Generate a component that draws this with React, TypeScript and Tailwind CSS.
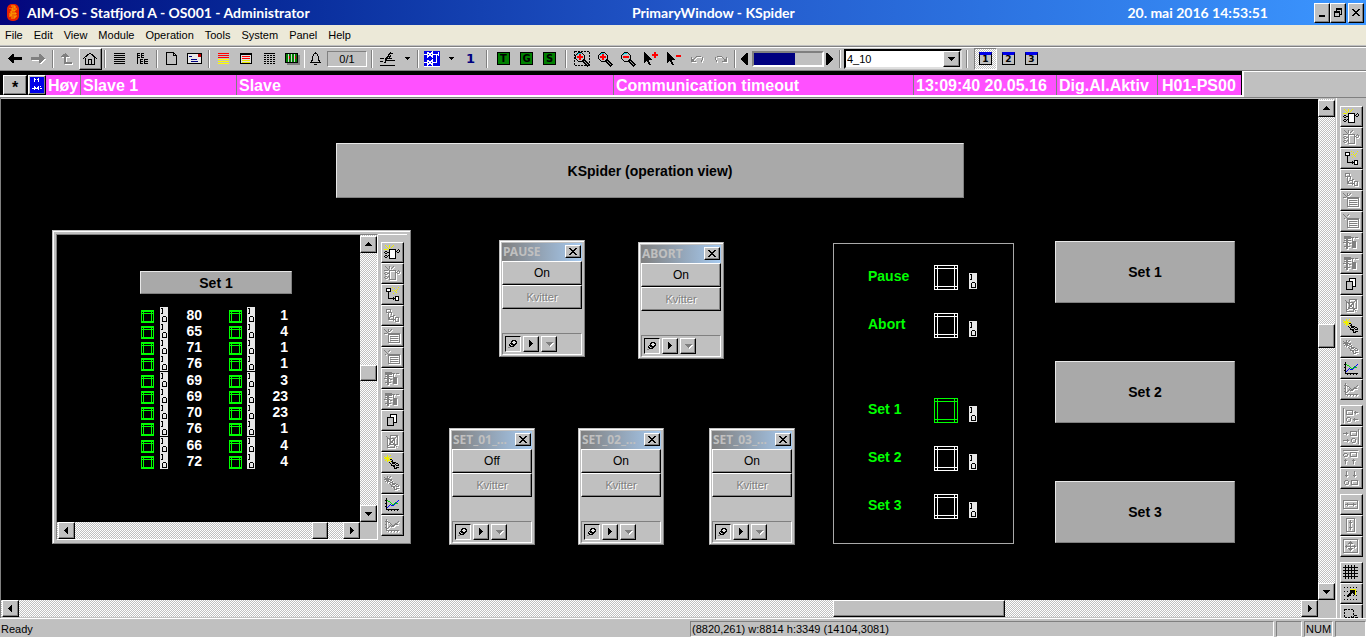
import type { ReactNode } from "react";
import clsx from "clsx";

const raised =
    "border border-t-white border-l-white border-r-black border-b-black bg-[#c0c0c0] text-black shadow-[inset_-1px_-1px_#808080]";
const sunken = "border border-t-[#808080] border-r-white border-b-white border-l-[#808080]";
const dither = "bg-[conic-gradient(#fff_25%,#c0c0c0_0_50%,#fff_0_75%,#c0c0c0_0)] bg-[length:2px_2px]";
const etched = "text-[#808080] drop-shadow-[1px_1px_0_#fff]";
const plate =
    "border border-t-[#e8e8e8] border-l-[#e8e8e8] border-r-[#808080] border-b-[#808080] bg-[#a9a9a9] text-[14px] font-bold text-black";

type IconProps = { w?: number; h?: number; className?: string; children: ReactNode };

const Icon = ({ w = 16, h = 16, className, children }: IconProps) => (
    <svg
        width={w}
        height={h}
        viewBox={`0 0 ${w} ${h}`}
        fill="none"
        stroke="currentColor"
        shapeRendering="crispEdges"
        className={clsx("shrink-0", className)}
        aria-hidden="true"
    >
        {children}
    </svg>
);

/* ---------- Scrollbars ---------- */

const ARROWS = {
    up: "M4 2h1v1h1v1h1v1h1v1H1V5h1V4h1V3h1z",
    down: "M1 3h7v1H7v1H6v1H5v1H4V6H3V5H2V4H1z",
    left: "M5 1h1v7H5V7H4V6H3V5H2V4h1V3h1V2h1z",
    right: "M3 1h1v1h1v1h1v1h1v1H6v1H5v1H4v1H3z",
};

const Arrow = ({ dir, className }: { dir: keyof typeof ARROWS; className?: string }) => (
    <Icon w={9} h={9} className={className}>
        <path d={ARROWS[dir]} fill="currentColor" stroke="none" />
    </Icon>
);

const ScrollButton = ({ dir }: { dir: keyof typeof ARROWS }) => (
    <button
        type="button"
        aria-label={`Scroll ${dir}`}
        className={clsx("flex h-[17px] w-[17px] shrink-0 items-center justify-center", raised)}
    >
        <Arrow dir={dir} />
    </button>
);

type ScrollProps = { before: number; after: number; thumb: string };

const VScroll = ({ before, after, thumb }: ScrollProps) => (
    <div className={clsx("flex w-[17px] shrink-0 flex-col pt-px", dither)}>
        <ScrollButton dir="up" />
        <div style={{ flexGrow: before }} />
        <div className={clsx("w-full shrink-0", thumb, raised)} />
        <div style={{ flexGrow: after }} />
        <ScrollButton dir="down" />
    </div>
);

const HScroll = ({ before, after, thumb }: ScrollProps) => (
    <div className={clsx("flex h-[17px] min-w-0 flex-1 pl-px", dither)}>
        <ScrollButton dir="left" />
        <div style={{ flexGrow: before }} />
        <div className={clsx("h-full shrink-0", thumb, raised)} />
        <div style={{ flexGrow: after }} />
        <ScrollButton dir="right" />
    </div>
);

/* ---------- Vertical tool palette ---------- */

const NewObject = ({ off }: { off?: boolean }) => (
    <Icon className={off ? etched : undefined}>
        <path
            d="M1 0h1v1h1v1h1v1h1v1H4V3H3V2H2V1H1zM5 0h1v3H5zM9 0h1v1H9v1H8v1H7V2h1V1h1zM0 4h4v1H0z"
            fill={off ? "currentColor" : "#f0f000"}
            stroke="none"
        />
        <rect x="5.5" y="4.5" width="6" height="9" fill={off ? "none" : "#fff"} />
        <path d="M1 6.5h2M.5 7v1M3.5 7v1M1 8.5h2M1 10.5h2M.5 11v1M3.5 11v1M1 12.5h2M4 7.5h1M4 10.5h1M12 6.5h1M13 5.5h1M14 4.5h1M15.5 5v2M13 7.5h2" />
    </Icon>
);

const Connect = ({ off }: { off?: boolean }) => (
    <Icon className={off ? etched : undefined}>
        {off ? (
            <path d="M6 4.5h2M7.5 5v2M9 7.5h2M6 8.5h3M5.5 9v2M9.5 8v2" />
        ) : (
            <path
                d="M8 3h1v1H8zM10 1h1v1h-1zM11 4h1v1h-1zM13 2h1v1h-1zM9 6h1v1H9zM12 5h1v1h-1zM14 0h1v1h-1zM10 3h1v1h-1zM12 3h1v1h-1zM8 0h1v1H8z"
                fill="#f0f000"
                stroke="none"
            />
        )}
        <rect x="2.5" y="1.5" width="4" height="3" fill={off ? "none" : "#fff"} />
        <rect x="11.5" y="9.5" width="3" height="4" fill={off ? "none" : "#fff"} />
        <path d="M4.5 5v6.5H11M9.5 10v3" />
    </Icon>
);

const ListPage = ({ star }: { star?: boolean }) => (
    <Icon className={etched}>
        <path d={star ? "M0 .5h1M1 1.5h1M2 2.5h1M3 3.5h1M4.5 0v3M7 .5h1M6 1.5h1M5 2.5h1M0 4.5h3" : "M0 .5h1M1 1.5h1M2 2.5h1M3 3.5h1M5 .5h1M4 1.5h1M1 4.5h1"} />
        <path d="M4.5 4.5h11v9h-11zM6 7.5h8M6 9.5h8M6 11.5h8M5 5.5h10" />
    </Icon>
);

const Hierarchy = () => (
    <Icon className={etched}>
        <path d="M1 1h7v3H1zM3 4h2v10H3zM9 6h4v7H9z" fill="currentColor" stroke="none" />
        <path d="M8 2.5h3M12 2.5h3M5 5.5h3M0 7.5h6M1 11.5h6M1 5.5h2M9.5 3v3M6 8.5h2" />
    </Icon>
);

const Copy = () => (
    <Icon>
        <path d="M6.5 4V1.5h6v8h-3" fill="#fff" />
        <rect x="3.5" y="4.5" width="6" height="8" fill="#c0c0c0" />
    </Icon>
);

const CopyOff = () => (
    <Icon className={etched}>
        <path d="M6.5 1.5h7v9h-7zM3.5 4.5h7v9h-7zM2 2l11 11M13 2L3 13" />
    </Icon>
);

const Plug = ({ off }: { off?: boolean }) => (
    <Icon className={off ? etched : undefined}>
        <path d="M0 1l7 6M3.5 0v7M7 0L1 6M0 3.5h8" stroke={off ? "currentColor" : "#f0f000"} />
        <path d="M6 4.5h2M8.5 5v3M9 7.5h3M5 7.5h1M6 8.5h1M7.5 9v2M8 10.5h2M10.5 11v3M12 8.5h2M11 9.5h1M10 10.5h1M12 10.5h3M12 12.5h3M14 9.5h1M11 13.5h2M7 6.5h1M8 8.5h3M9 11.5h1" />
    </Icon>
);

const Trend = ({ off }: { off?: boolean }) => (
    <Icon className={off ? etched : undefined}>
        <path d="M2.5 1v11.5H15M1 3.5h1M1 6.5h1M1 9.5h1M4.5 13v1M7.5 13v1M10.5 13v1M13.5 13v1" />
        <path d="M3 3.5h1M4 4.5h2M6 5.5h1M7 6.5h1M8 7.5h2M10 6.5h1M11 5.5h1M12 6.5h2" stroke={off ? "currentColor" : "#00e000"} />
        <path d="M3 10.5h1M4 9.5h1M5 8.5h1M6 7.5h1M7 8.5h3M10 7.5h1M11 6.5h1M12 5.5h1M13 4.5h1M14 3.5h1" stroke={off ? "currentColor" : "#0000ff"} />
    </Icon>
);

const Etched = ({ d }: { d: string }) => (
    <Icon className={etched}>
        <path d={d} />
    </Icon>
);

const GridIcon = () => (
    <Icon>
        <path d="M0 2.5h15M0 5.5h15M0 8.5h15M0 11.5h15M2.5 0v14M5.5 0v14M8.5 0v14M11.5 0v14" />
    </Icon>
);

const Snap = () => (
    <Icon>
        <path d="M1 1.5h14M1 5.5h14M1 9.5h14M1 13.5h14" strokeDasharray="1 2" />
        <path d="M7 4h5v5h-1V8h-1V7H9v1H8v1H7v1H6v1H4V9h1V8h1V7h1V6h1V5H7z" fill="#000" stroke="none" />
        <path d="M7 3.5h5.5V9" stroke="#f0f000" />
    </Icon>
);

const SelectArea = () => (
    <Icon>
        <path d="M1.5 2.5h9v8h-9z" strokeDasharray="2 1" />
        <path d="M8 9.5h1M9 10.5h2M11 8.5h3M12 10.5h3M10 12.5h5" />
    </Icon>
);

type ToolEntry = [string, ReactNode];

const objectTools: ToolEntry[] = [
    ["New object", <NewObject />],
    ["Object", <NewObject off />],
    ["New connection", <Connect />],
    ["Connection", <Connect off />],
    ["New list", <ListPage star />],
    ["List", <ListPage />],
    ["New hierarchy", <Hierarchy />],
    ["Hierarchy", <Hierarchy />],
    ["Copy", <Copy />],
    ["Cut copy", <CopyOff />],
    ["New link", <Plug />],
    ["Link", <Plug off />],
    ["New trend", <Trend />],
    ["Trend", <Trend off />],
];

const alignTools: ToolEntry[] = [
    ["Align left", <Etched d="M.5 0v15M3.5 2.5h6v4h-6zM11 4.5h4M12.5 3v3M4 9.5h3M3.5 10v3M7.5 10v3M4 13.5h3M10 11.5h5M11.5 10v3" />],
    ["Align right", <Etched d="M15.5 0v15M7.5 2.5h6v4h-6zM0 4.5h5M3.5 3v3M9 9.5h3M8.5 10v3M12.5 10v3M9 13.5h3M0 11.5h6M4.5 10v3" />],
    ["Align top", <Etched d="M0 .5h15M1 3.5h3M.5 4v2M4.5 4v2M1 6.5h3M7.5 2.5h6v4h-6zM2.5 9v5M1 10.5h3M10.5 9v5M9 10.5h3" />],
    ["Align bottom", <Etched d="M3.5 0v6M2 4.5h3M11.5 0v6M10 4.5h3M2 9.5h3M1.5 10v3M5.5 10v3M2 13.5h3M8.5 9.5h6v4h-6z" />],
];

const sizeTools: ToolEntry[] = [
    ["Same width", <Etched d="M.5 3.5h14v8H.5zM2 7.5h11M4.5 6v3M10.5 6v3" />],
    ["Same height", <Etched d="M3.5 .5h8v13h-8zM7.5 2v10M6 4.5h3M6 9.5h3" />],
    ["Same size", <Etched d="M.5 .5h14v13H.5zM2 7.5h11M7.5 2v10M6 3.5h3M6 10.5h3M3.5 6v3M11.5 6v3M5 4.5h5M5 9.5h5" />],
];

const gridTools: ToolEntry[] = [
    ["Grid", <GridIcon />],
    ["Snap to grid", <Snap />],
    ["Select area", <SelectArea />],
];

const ToolGroup = ({ tools }: { tools: ToolEntry[] }) => (
    <div className="flex flex-col">
        {tools.map(([label, icon]) => (
            <button
                key={label}
                type="button"
                aria-label={label}
                className={clsx("flex h-[21px] w-[23px] shrink-0 items-start pt-[2px] pl-[2px]", raised)}
            >
                {icon}
            </button>
        ))}
    </div>
);

/* ---------- Title bar, menu and toolbar ---------- */

const CloseIcon = () => (
    <Icon w={8} h={7}>
        <path
            d="M0 0h2v1h1v1h2V1h1V0h2v1H7v1H6v1H5v1h1v1h1v1h1v1H6V6H5V5H3v1H2v1H0V6h1V5h1V4h1V3H2V2H1V1H0z"
            fill="#000"
            stroke="none"
        />
    </Icon>
);

const TitleBar = () => (
    <header className="flex h-[25px] shrink-0 items-center bg-linear-to-r from-[#04047c] via-[#2256c8] to-[#3c96ff] pr-[2px] pl-[7px] font-['Lato',sans-serif] text-[14px] font-bold text-white">
        <svg width="12" height="17" viewBox="0 0 12 17" aria-hidden="true">
            <rect width="12" height="17" rx="5" fill="#e82000" />
            <path d="M4 2h4v2H5v2h3v1H4v2h5v1H4v2h4v2H4M3 4v1M9 4v2M3 9v4M9 11v2" stroke="#ffb000" fill="none" />
        </svg>
        <h1 className="ml-2 w-[605px] shrink-0">AIM-OS - Statfjord A - OS001 - Administrator</h1>
        <span>PrimaryWindow - KSpider</span>
        <time className="mr-[46px] ml-auto">20. mai 2016 14:53:51</time>
        <div className="flex">
            <button type="button" aria-label="Minimize" className={clsx("flex h-5 w-4 items-center justify-center", raised)}>
                <Icon w={8} h={8}>
                    <path d="M1 7h6" strokeWidth="2" />
                </Icon>
            </button>
            <button type="button" aria-label="Restore" className={clsx("flex h-5 w-4 items-center justify-center", raised)}>
                <Icon w={10} h={10}>
                    <path d="M3 .5h6M3 1.5h6M3.5 1v2M8.5 1v5H7M1 3.5h6M1 4.5h6M1.5 4v4.5h5V4" />
                </Icon>
            </button>
            <button type="button" aria-label="Close" className={clsx("ml-0.5 flex h-5 w-4 items-center justify-center pb-px", raised)}>
                <CloseIcon />
            </button>
        </div>
    </header>
);

const menus = ["File", "Edit", "View", "Module", "Operation", "Tools", "System", "Panel", "Help"];

const MenuBar = () => (
    <nav className="flex h-[21px] shrink-0 items-center gap-[11px] border-b border-[#c0c0c0] bg-[#ece9d8] pl-[5px] text-[11px]">
        {menus.map((menu) => (
            <button key={menu} type="button">
                {menu}
            </button>
        ))}
    </nav>
);

const Separator = ({ wide }: { wide?: boolean }) => (
    <div className={clsx("flex shrink-0 justify-center", wide ? "w-[10px]" : "w-[6px]")}>
        <div className="h-[18px] w-[2px] border-r border-l border-r-white border-l-[#808080]" />
    </div>
);

const Tool = ({ label, className, children }: { label: string; className?: string; children: ReactNode }) => (
    <button
        type="button"
        aria-label={label}
        className={clsx("flex h-[22px] shrink-0 items-center justify-center", className ?? "w-[23px]")}
    >
        {children}
    </button>
);

/* Toolbar buttons are 23px wide and 22px high, so pad a drawing to odd width and even height */
const ToolIcon = ({ w = 16, h = 16, className, children }: IconProps) => (
    <Icon w={w} h={h} className={clsx(w % 2 === 0 && "mr-px", h % 2 === 1 && "mb-px", className)}>
        {children}
    </Icon>
);

const Caret = () => (
    <ToolIcon w={5} h={3}>
        <path d="M0 0h5v1H4v1H3v1H2V2H1V1H0z" fill="currentColor" stroke="none" />
    </ToolIcon>
);

const LetterTool = ({ letter }: { letter: string }) => (
    <Tool label={`Display ${letter}`}>
        <span className="h-[13px] w-[13px] border border-black bg-[#008000] text-center font-['DejaVu_Sans',sans-serif] text-[10px] leading-[11px] font-bold">
            {letter}
        </span>
    </Tool>
);

const Magnifier = ({ sign, area }: { sign: "plus" | "minus"; area?: boolean }) => (
    <ToolIcon>
        {area && <path d="M.5 .5h15v14H.5z" strokeDasharray="2 1" />}
        <path d="M4 1.5h4M3 2.5h1M8 2.5h1M2.5 3v1M9.5 3v1M1.5 4v4M10.5 4v4M2.5 8v1M9.5 8v1M3 9.5h1M8 9.5h1M4 10.5h4" />
        <path d="M3 3.5h1M4 2.5h3" stroke="#00d0e0" />
        <path d="M9 9l6 6" strokeWidth="3" />
        <path d="M10 10l4 4" stroke="#a0a0a0" />
        <path d={sign === "plus" ? "M3 6h6M6 3v6" : "M3 6h6"} stroke="#ff0000" strokeWidth="2" />
    </ToolIcon>
);

const Pointer = ({ sign }: { sign: "plus" | "minus" }) => (
    <ToolIcon>
        <path d="M1 1h1v1h1v1h1v1h1v1h1v1h1v1h1v1h1v1H6v2h1v2h1v1H6v-1H5v-2H4v-1H3v1H2v1H1z" fill="currentColor" stroke="none" />
        <path d={sign === "plus" ? "M9 4h6M12 1v6" : "M10 5h5"} stroke="#ff0000" strokeWidth="2" />
    </ToolIcon>
);

const ValveIcon = () => (
    <ToolIcon>
        <rect width="16" height="16" fill="#0000e8" stroke="none" />
        <path
            d="M0 3.5h3M3.5 1v5l5-5v5l-5-5M9 3.5h5M12.5 3v8M0 11.5h3M3.5 9v5l5-5v5l-5-5M9 11.5h4M0 15.5h16M14.5 1v4"
            stroke="#fff"
        />
    </ToolIcon>
);

const AlarmValveIcon = () => (
    <Icon w={14} h={16}>
        <rect width="14" height="16" fill="#0000e8" stroke="none" />
        <path
            d="M4.5 1v4M5.5 2v1M7.5 2v1M8.5 1v4M4.5 9v4M5.5 10v2M6.5 11v1M7.5 10v2M8.5 9v4M2 11.5h2M10 9.5h1M10 11.5h2"
            stroke="#fff"
        />
    </Icon>
);

const WindowTool = ({ number, active }: { number: number; active?: boolean }) => (
    <button
        type="button"
        aria-pressed={!!active}
        className={clsx("flex h-[22px] w-[23px] shrink-0 items-center justify-center", active && [sunken, dither])}
    >
        <span className="h-[13px] w-[13px] border border-t-[3px] border-black border-t-[#0000e8] bg-[#c0c0c0] text-center font-['DejaVu_Sans',sans-serif] text-[9px] leading-[9px] font-bold">
            {number}
        </span>
    </button>
);

const Toolbar = () => (
    <div className="flex h-[25px] shrink-0 items-center border-t border-b border-[#808080] bg-[#c0c0c0] pl-1 shadow-[inset_0_1px_#fff]">
        <Tool label="Back">
            <ToolIcon w={14} h={9}>
                <path d="M0 4h1V3h1V2h1V1h1V0h2v3h8v3H6v3H4V8H3V7H2V6H1V5H0z" fill="#000" stroke="none" />
            </ToolIcon>
        </Tool>
        <Tool label="Forward">
            <ToolIcon w={14} h={9} className={etched}>
                <path d="M14 4h-1V3h-1V2h-1V1h-1V0H8v3H0v3h8v3h2V8h1V7h1V6h1V5h1z" fill="currentColor" stroke="none" />
            </ToolIcon>
        </Tool>
        <Separator />
        <Tool label="Up">
            <ToolIcon w={12} h={12} className={etched}>
                <path d="M4 0h1v1h1v1h1v1h1v1H5v5h6v2H3V4H0V3h1V2h1V1h2z" fill="currentColor" stroke="none" />
            </ToolIcon>
        </Tool>
        <Tool label="Home" className={clsx("w-[23px]", raised)}>
            <ToolIcon w={14} h={13}>
                <path d="M0 7l7-6 7 6M2.5 6v6.5h9V6M5.5 12V7.5h3V12" />
            </ToolIcon>
        </Tool>
        <Separator />
        <Tool label="Alarm list">
            <ToolIcon w={11} h={11}>
                <path d="M0 .5h11M0 2.5h11M0 4.5h11M0 6.5h11M0 8.5h11M0 10.5h11" />
            </ToolIcon>
        </Tool>
        <Tool label="Event tree">
            <ToolIcon w={11} h={11}>
                <path d="M.5 0v11M0 .5h3M4 .5h3M0 2.5h3M4 2.5h3M0 4.5h3M4 4.5h3M4.5 0v5M3.5 6v5M3 6.5h3M3 8.5h3M3 10.5h3M7.5 6v5M7 6.5h4M7 8.5h4M7 10.5h4" />
            </ToolIcon>
        </Tool>
        <Separator />
        <Tool label="New page">
            <ToolIcon w={11} h={13}>
                <path d="M.5 .5h7v3h3v9H.5zM8 1.5h1M9 2.5h1" />
            </ToolIcon>
        </Tool>
        <Tool label="Message">
            <ToolIcon w={15} h={11}>
                <rect x=".5" y=".5" width="14" height="10" fill="#e8e8e8" />
                <path d="M2 3.5h3M4 6.5h6M4 8.5h7" stroke="#000080" />
                <path d="M11 2.5h3" stroke="#c00000" strokeWidth="3" />
            </ToolIcon>
        </Tool>
        <Separator />
        <Tool label="Alarm lines">
            <ToolIcon w={11} h={11}>
                <path d="M0 .5h11M0 2.5h11M0 4.5h11" stroke="#ff0000" />
                <path d="M0 6.5h11M0 8.5h11M0 10.5h11" stroke="#ffff00" />
            </ToolIcon>
        </Tool>
        <Tool label="Alarm window">
            <ToolIcon w={12} h={11}>
                <rect x=".5" y=".5" width="11" height="10" fill="#e0e0e0" />
                <path d="M0 1.5h12" />
                <path d="M2 3.5h8M2 5.5h8" stroke="#ff0000" />
                <path d="M2 7.5h8M2 9.5h8" stroke="#e8e800" />
            </ToolIcon>
        </Tool>
        <Tool label="Event list">
            <ToolIcon w={11} h={11}>
                <path d="M0 .5h11" />
                <path d="M0 2.5h11M0 4.5h11M0 6.5h11M0 8.5h11M0 10.5h11" strokeDasharray="2 1" />
            </ToolIcon>
        </Tool>
        <Tool label="Rack">
            <ToolIcon w={15} h={12}>
                <path d="M2 2h13v10H2z" fill="#808080" stroke="none" />
                <rect x=".5" y=".5" width="12" height="9" fill="#008000" />
                <path d="M3.5 1v8M6.5 1v8M9.5 1v8" stroke="#d0d0d0" />
                <path d="M4.5 3v3M10.5 3v3" stroke="#c00000" />
            </ToolIcon>
        </Tool>
        <div className="h-[18px] w-px shrink-0 bg-white" />
        <Tool label="Acknowledge" className="w-[21px]">
            <ToolIcon w={11} h={13}>
                <path d="M5.5 0v2M4 1.5h3M3.5 2v2M7.5 2v2M2.5 4v5M8.5 4v5M1.5 8v2M9.5 8v2M0 10.5h11M4 12.5h3" />
            </ToolIcon>
        </Tool>
        <output className={clsx("ml-px h-4 w-10 shrink-0 text-center text-[11px] leading-[14px]", sunken)}>0/1</output>
        <Separator wide />
        <Tool label="Sign">
            <ToolIcon w={16} h={14}>
                <path d="M0 6.5h4M0 9.5h3M7 8.5h8M8.5 2v3M9.5 1v2M10.5 0v2M11 1.5h2M7.5 4v3M6.5 5v4M5.5 6v4M4 10.5h2M9.5 4v2M10.5 3v2M8 6.5h4M0 13.5h15" />
            </ToolIcon>
        </Tool>
        <Tool label="Sign options" className="w-[15px]">
            <Caret />
        </Tool>
        <Separator />
        <Tool label="Process display">
            <ValveIcon />
        </Tool>
        <Tool label="Display options" className="w-[15px]">
            <Caret />
        </Tool>
        <button type="button" className="w-[23px] text-center font-['DejaVu_Sans',sans-serif] text-[13px] font-bold text-[#000080]">
            1
        </button>
        <Separator wide />
        <LetterTool letter="T" />
        <LetterTool letter="G" />
        <LetterTool letter="S" />
        <Separator wide />
        <Tool label="Zoom area">
            <Magnifier sign="plus" area />
        </Tool>
        <Tool label="Zoom in">
            <Magnifier sign="plus" />
        </Tool>
        <Tool label="Zoom out">
            <Magnifier sign="minus" />
        </Tool>
        <Tool label="Add to selection">
            <Pointer sign="plus" />
        </Tool>
        <Tool label="Remove from selection">
            <Pointer sign="minus" />
        </Tool>
        <Tool label="Undo">
            <ToolIcon w={13} h={9} className={etched}>
                <path d="M.5 3v4.5H5M1.5 5v2M2.5 5v2M3.5 4v1M4.5 3v1M5 2.5h5M11.5 3v3M10.5 6v2" />
            </ToolIcon>
        </Tool>
        <Tool label="Redo">
            <ToolIcon w={13} h={9} className={etched}>
                <path d="M12.5 3v4.5H8M11.5 5v2M10.5 5v2M9.5 4v1M8.5 3v1M8 2.5H3M1.5 3v3M2.5 6v2" />
            </ToolIcon>
        </Tool>
        <Separator />
        <Tool label="Previous" className="w-[13px]">
            <ToolIcon w={8} h={12}>
                <path d="M8 0v12H7L0 6l7-6z" fill="#000" stroke="none" />
            </ToolIcon>
        </Tool>
        <div className="ml-px h-4 w-[72px] shrink-0 border-2 border-t-[#808080] border-r-white border-b-white border-l-[#808080]">
            <div className="h-full w-3/5 bg-[#000080]" />
        </div>
        <Tool label="Next" className="w-[13px]">
            <ToolIcon w={8} h={12}>
                <path d="M0 0h1l7 6-7 6H0z" fill="#000" stroke="none" />
            </ToolIcon>
        </Tool>
        <Separator />
        <div className="relative ml-px flex h-5 w-[118px] shrink-0">
            <select
                aria-label="Display"
                className="h-full w-full appearance-none rounded-none border-2 border-t-black border-r-[#dfdfdf] border-b-[#dfdfdf] border-l-black bg-white pl-px text-[11px] leading-4"
            >
                <option>4_10</option>
            </select>
            <span className={clsx("pointer-events-none absolute top-[2px] right-[2px] flex h-4 w-[17px] justify-center pt-[2px]", raised)}>
                <Arrow dir="down" />
            </span>
        </div>
        <Separator wide />
        <div className="ml-[2px] flex">
            <WindowTool number={1} active />
            <WindowTool number={2} />
            <WindowTool number={3} />
        </div>
    </div>
);

/* ---------- Alarm line ---------- */

const alarmCells: [string, string][] = [
    ["Høy", "w-[35px]"],
    ["Slave 1", "w-[156px]"],
    ["Slave", "w-[377px]"],
    ["Communication timeout", "w-[300px]"],
    ["13:09:40 20.05.16", "w-[143px]"],
    ["Dig.Al.Aktiv", "w-[101px]"],
    ["H01-PS00", "w-[83px]"],
];

const AlarmLine = () => (
    <div className="flex h-[27px] shrink-0 border-b border-[#808080] bg-[#c0c0c0] shadow-[inset_0_1px_#fff]">
        <div className="flex border-r-2 border-b-2 border-white bg-black pt-1 pr-px pl-[3px]">
            <button
                type="button"
                aria-label="Alarm list"
                className={clsx("flex h-5 w-6 justify-center pt-1 text-[16px] leading-4 font-bold", raised)}
            >
                *
            </button>
            <button
                type="button"
                aria-label="Process display"
                className={clsx("ml-px flex h-5 w-[18px] items-center justify-center", raised)}
            >
                <AlarmValveIcon />
            </button>
            {alarmCells.map(([text, width]) => (
                <div
                    key={text}
                    className={clsx(
                        "h-5 shrink-0 border-r border-[#808080] bg-[#ff50ff] pl-[2px] text-[16px] leading-[21px] font-bold whitespace-nowrap text-white last:border-0 last:pl-1",
                        width,
                    )}
                >
                    {text}
                </div>
            ))}
        </div>
    </div>
);

/* ---------- Process canvas ---------- */

const Lamp = ({ color, small }: { color: string; small?: boolean }) =>
    small ? (
        <Icon w={13} h={13} className={color}>
            <path d="M.5 .5h12v12H.5zM1 1.5h11M1 11.5h11M2.5 0v13M10.5 0v13M1 3.5h11" />
        </Icon>
    ) : (
        <Icon w={25} h={25} className={color}>
            <path d="M.5 .5h23v24H.5zM0 3.5h24M0 21.5h24M3.5 0v25M20.5 0v25" />
        </Icon>
    );

const Switch = ({ className }: { className?: string }) => (
    <Icon w={8} h={16} className={className}>
        <rect width="8" height="16" fill="#e8e8e8" stroke="none" />
        <path d="M1 1.5h1.5v5H1M3 9.5h3M2.5 10v4.5h4V10" stroke="#000" />
    </Icon>
);

const readings = [
    [80, 1],
    [65, 4],
    [71, 1],
    [76, 1],
    [69, 3],
    [69, 23],
    [70, 23],
    [76, 1],
    [66, 4],
    [72, 4],
];

const SetWindow = () => (
    <section
        aria-label="Set 1"
        className="absolute top-[131px] left-[51px] flex w-[359px] border border-t-[#c0c0c0] border-r-[#808080] border-b-[#808080] border-l-[#c0c0c0] bg-[#c0c0c0] p-[3px] shadow-[inset_1px_1px_#fff]"
    >
        <div className={clsx("flex-1", sunken)}>
            <div className="flex">
                <div className="h-[287px] flex-1 bg-black pt-9 pl-[83px]">
                    <button type="button" className={clsx("h-[23px] w-[152px] pt-px leading-5", plate)}>
                        Set 1
                    </button>
                    <table className="mt-[11px] text-right text-[14px] leading-4 font-bold text-white">
                        <tbody>
                            {readings.map(([left, right], i) => (
                                <tr key={i} className="h-4 nth-[4n+1]:h-[17px]">
                                    <td className="w-5 p-0 pt-[3px] pl-px">
                                        <Lamp small color="text-[#00ff00]" />
                                    </td>
                                    <td className="w-2 p-0">
                                        <Switch className="block" />
                                    </td>
                                    <td className="w-[34px] p-0">{left}</td>
                                    <td className="w-[45px] p-0 pt-[3px] pl-[27px]">
                                        <Lamp small color="text-[#00ff00]" />
                                    </td>
                                    <td className="w-2 p-0">
                                        <Switch className="block" />
                                    </td>
                                    <td className="w-[33px] p-0">{right}</td>
                                </tr>
                            ))}
                        </tbody>
                    </table>
                </div>
                <VScroll before={113} after={125} thumb="h-4" />
            </div>
            <div className="flex pr-[17px]">
                <HScroll before={237} after={15} thumb="w-4" />
            </div>
        </div>
        <div className="w-[29px] border-t border-white pt-[7px] pl-[3px]">
            <ToolGroup tools={objectTools} />
        </div>
    </section>
);

type FaceplateProps = { title: string; value: string; position: string };

const Faceplate = ({ title, value, position }: FaceplateProps) => (
    <section
        aria-label={title}
        className={clsx(
            "absolute w-[86px] border border-t-[#c0c0c0] border-r-[#808080] border-b-[#808080] border-l-[#c0c0c0] bg-[#c0c0c0] px-[2px] pt-[2px] pb-px shadow-[inset_1px_1px_#fff]",
            position,
        )}
    >
        <div className="flex h-[18px] items-center justify-between bg-linear-to-r from-[#808080] to-[#a6caf0] pr-px pb-px pl-px">
            <h2 className="font-['Noto_Sans',sans-serif] text-[12px] leading-4 font-bold whitespace-nowrap text-[#c0c0c0]">{title}</h2>
            <button
                type="button"
                aria-label={`Close ${title}`}
                className={clsx("flex h-[13px] w-4 shrink-0 items-center justify-center", raised)}
            >
                <CloseIcon />
            </button>
        </div>
        <button type="button" className={clsx("block h-6 w-full text-[12px]", raised)}>
            {value}
        </button>
        <button
            type="button"
            disabled
            className="block h-6 w-full border border-t-white border-r-black border-b-black border-l-white bg-[#c0c0c0] text-[11px] text-[#808080] shadow-[inset_-1px_-1px_#808080] [text-shadow:1px_1px_#fff]"
        >
            Kvitter
        </button>
        <div className={clsx("mt-6 flex h-[22px] items-center gap-[2px] pl-[2px]", sunken)}>
            <button
                type="button"
                aria-label="Pin"
                className="flex h-4 w-4 items-center justify-center border border-t-black border-r-white border-b-white border-l-black"
            >
                <Icon w={10} h={10}>
                    <path d="M4 1h4v1h1v3H8v1H7v1H6v1H2V7H1V5h1V4h1V2h1z" fill="#000" stroke="none" />
                    <path d="M5 2h2v1h1v1H7v1H5V4H4V3h1zM2 5h1v1h1v1H3V6H2z" fill="#e0e0e0" stroke="none" />
                    <path d="M0 8.5h2M4 6.5h1" stroke="#808080" />
                </Icon>
            </button>
            <button type="button" aria-label="Expand" className={clsx("flex h-4 w-4 items-start pt-[2px] pl-[2px]", raised)}>
                <Arrow dir="right" />
            </button>
            <button
                type="button"
                aria-label="More"
                disabled
                className={clsx("flex h-4 w-4 items-start pt-[2px] pl-[3px]", raised)}
            >
                <Arrow dir="down" className={etched} />
            </button>
        </div>
    </section>
);

const StatusRow = ({ label, on }: { label: string; on?: boolean }) => (
    <div className="flex h-12 items-start">
        <span className="w-[66px] pt-[3px] text-[14px] leading-4 font-bold text-[#00ff00]">{label}</span>
        <Lamp color={on ? "text-[#00ff00]" : "text-white"} />
        <Switch className="mt-2 ml-[10px]" />
    </div>
);

const Canvas = () => (
    <main className="relative min-w-0 flex-1 overflow-hidden bg-black">
        <div className={clsx("absolute top-11 left-[335px] flex h-[55px] w-[628px] items-center justify-center pt-px", plate)}>
            KSpider (operation view)
        </div>

        <SetWindow />

        <Faceplate title="PAUSE" value="On" position="top-[141px] left-[498px]" />
        <Faceplate title="ABORT" value="On" position="top-[143px] left-[637px]" />
        <Faceplate title="SET_01_..." value="Off" position="top-[329px] left-[448px]" />
        <Faceplate title="SET_02_..." value="On" position="top-[329px] left-[577px]" />
        <Faceplate title="SET_03_..." value="On" position="top-[329px] left-[708px]" />

        <div className="absolute top-36 left-[832px] h-[301px] w-[181px] border border-[#a9a9a9] pt-[21px] pl-[34px]">
            <StatusRow label="Pause" />
            <StatusRow label="Abort" />
            <div className="mt-[37px]">
                <StatusRow label="Set 1" on />
                <StatusRow label="Set 2" />
                <StatusRow label="Set 3" />
            </div>
        </div>

        <div className="absolute top-[142px] left-[1054px] flex w-[180px] flex-col gap-[58px]">
            {["Set 1", "Set 2", "Set 3"].map((label) => (
                <button key={label} type="button" className={clsx("h-[62px]", plate)}>
                    {label}
                </button>
            ))}
        </div>
    </main>
);

const StatusBar = () => (
    <footer className="flex h-[19px] shrink-0 gap-[2px] border-t border-white bg-[#c0c0c0] pt-[2px] text-[11px] leading-[14px]">
        <div className="w-[688px] shrink-0 pl-px leading-4">Ready</div>
        <div className={clsx("flex-1 pl-px", sunken)}>(8820,261) w:8814 h:3349 (14104,3081)</div>
        <div className={clsx("w-[26px]", sunken)} />
        <div className={clsx("w-[29px] pl-px", sunken)}>NUM</div>
        <div className={clsx("w-[31px]", sunken)} />
    </footer>
);

export default function App() {
    return (
        <div className="flex h-screen flex-col overflow-hidden bg-[#c0c0c0] font-['Liberation_Sans',Arial,sans-serif] text-black">
            <TitleBar />
            <MenuBar />
            <Toolbar />
            <AlarmLine />
            <div className="flex min-h-0 flex-1">
                <div className="flex min-w-0 flex-1 flex-col border-l border-[#808080] pt-px pb-px">
                    <div className="flex min-h-0 flex-1">
                        <Canvas />
                        <VScroll before={207} after={235} thumb="h-6" />
                    </div>
                    <div className="flex pr-[17px]">
                        <HScroll before={814} after={296} thumb="w-[172px]" />
                    </div>
                </div>
                <div className="ml-px flex w-[30px] shrink-0 flex-col gap-[5px] overflow-hidden border-l border-white pt-2 pl-[3px]">
                    <ToolGroup tools={objectTools} />
                    <ToolGroup tools={alignTools} />
                    <ToolGroup tools={sizeTools} />
                    <ToolGroup tools={gridTools} />
                </div>
            </div>
            <StatusBar />
        </div>
    );
}
